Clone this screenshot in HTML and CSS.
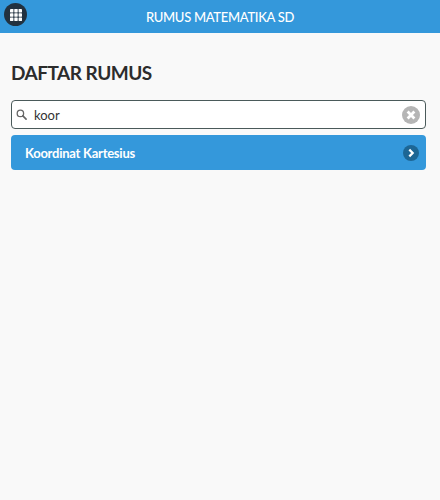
FILE: index.html
```html
<!DOCTYPE html>
<html lang="en">
<head>
    <meta charset="UTF-8">
    <title>Rumus Matematika SD</title>
    <link rel="stylesheet" href="styles.css">
</head>
<body>
<div class="header">
    <a class="menu-btn">
        <svg width="12" height="12" viewBox="0 0 14 14">
            <g fill="#fff">
                <rect x="0" y="0" width="4" height="4" rx="0.5"/>
                <rect x="5" y="0" width="4" height="4" rx="0.5"/>
                <rect x="10" y="0" width="4" height="4" rx="0.5"/>
                <rect x="0" y="5" width="4" height="4" rx="0.5"/>
                <rect x="5" y="5" width="4" height="4" rx="0.5"/>
                <rect x="10" y="5" width="4" height="4" rx="0.5"/>
                <rect x="0" y="10" width="4" height="4" rx="0.5"/>
                <rect x="5" y="10" width="4" height="4" rx="0.5"/>
                <rect x="10" y="10" width="4" height="4" rx="0.5"/>
            </g>
        </svg>
    </a>
    <span class="title">RUMUS MATEMATIKA SD</span>
</div>
<div class="content">
    <h1>DAFTAR RUMUS</h1>
    <div class="search">
        <svg class="search-icon" width="11" height="11" viewBox="0 0 12 12">
            <circle cx="4.8" cy="4.8" r="3.5" fill="none" stroke="#666" stroke-width="1.4"/>
            <path d="M7.5 7.5L11 11" stroke="#666" stroke-width="1.8" stroke-linecap="round"/>
        </svg>
        <span class="search-text">koor</span>
        <svg class="clear-icon" width="18" height="18" viewBox="0 0 18 18">
            <circle cx="9" cy="9" r="9" fill="#b5b5b5"/>
            <path d="M5.6 5.6L12.4 12.4M12.4 5.6L5.6 12.4" stroke="#fff" stroke-width="2.8"/>
        </svg>
    </div>
    <ul class="list">
        <li>
            <span>Koordinat Kartesius</span>
            <svg width="16" height="16" viewBox="0 0 16 16">
                <circle cx="8" cy="8" r="8" fill="#1d6694"/>
                <path d="M6.3 4.6L9.7 8L6.3 11.4" fill="none" stroke="#fff" stroke-width="2.2"/>
            </svg>
        </li>
    </ul>
</div>
</body>
</html>
```

FILE: styles.css
```css
*{
    margin: 0;
    padding: 0;
    box-sizing: border-box;
}
html, body{
    height: 100%;
}
body{
    background-color: #f9f9f9;
    font-family: Lato, "Liberation Sans", sans-serif;
    color: #333333;
}
ul{
    list-style: none;
}
.header{
    height: 33px;
    background-color: #3498db;
    display: flex;
    align-items: center;
    justify-content: center;
    position: relative;
}
.header .title{
    color: #ffffff;
    font-size: 13px;
    font-weight: 500;
    letter-spacing: -0.3px;
}
.menu-btn{
    position: absolute;
    top: 3px;
    left: 4px;
    width: 23px;
    height: 23px;
    border-radius: 50%;
    background-color: #22313f;
    display: flex;
    align-items: center;
    justify-content: center;
}
.content{
    padding: 28px 14px 0 11px;
}
h1{
    font-size: 19px;
    line-height: 24px;
    font-weight: 700;
    letter-spacing: -0.5px;
    color: #2c2c2c;
    margin-bottom: 15px;
}
.search{
    height: 29px;
    background-color: #ffffff;
    border: 1px solid #4a5a5a;
    border-radius: 4px;
    display: flex;
    align-items: center;
    padding: 0 5px 0 4px;
}
.search-icon{
    margin-right: 7px;
}
.search-text{
    flex: 1;
    font-size: 13px;
    color: #333333;
}
.list{
    margin-top: 6px;
}
.list li{
    height: 35px;
    background-color: #3498db;
    border-radius: 4px;
    display: flex;
    align-items: center;
    justify-content: space-between;
    padding: 0 7px 0 14px;
    color: #ffffff;
    font-size: 13px;
    font-weight: 700;
    letter-spacing: -0.25px;
}
```
